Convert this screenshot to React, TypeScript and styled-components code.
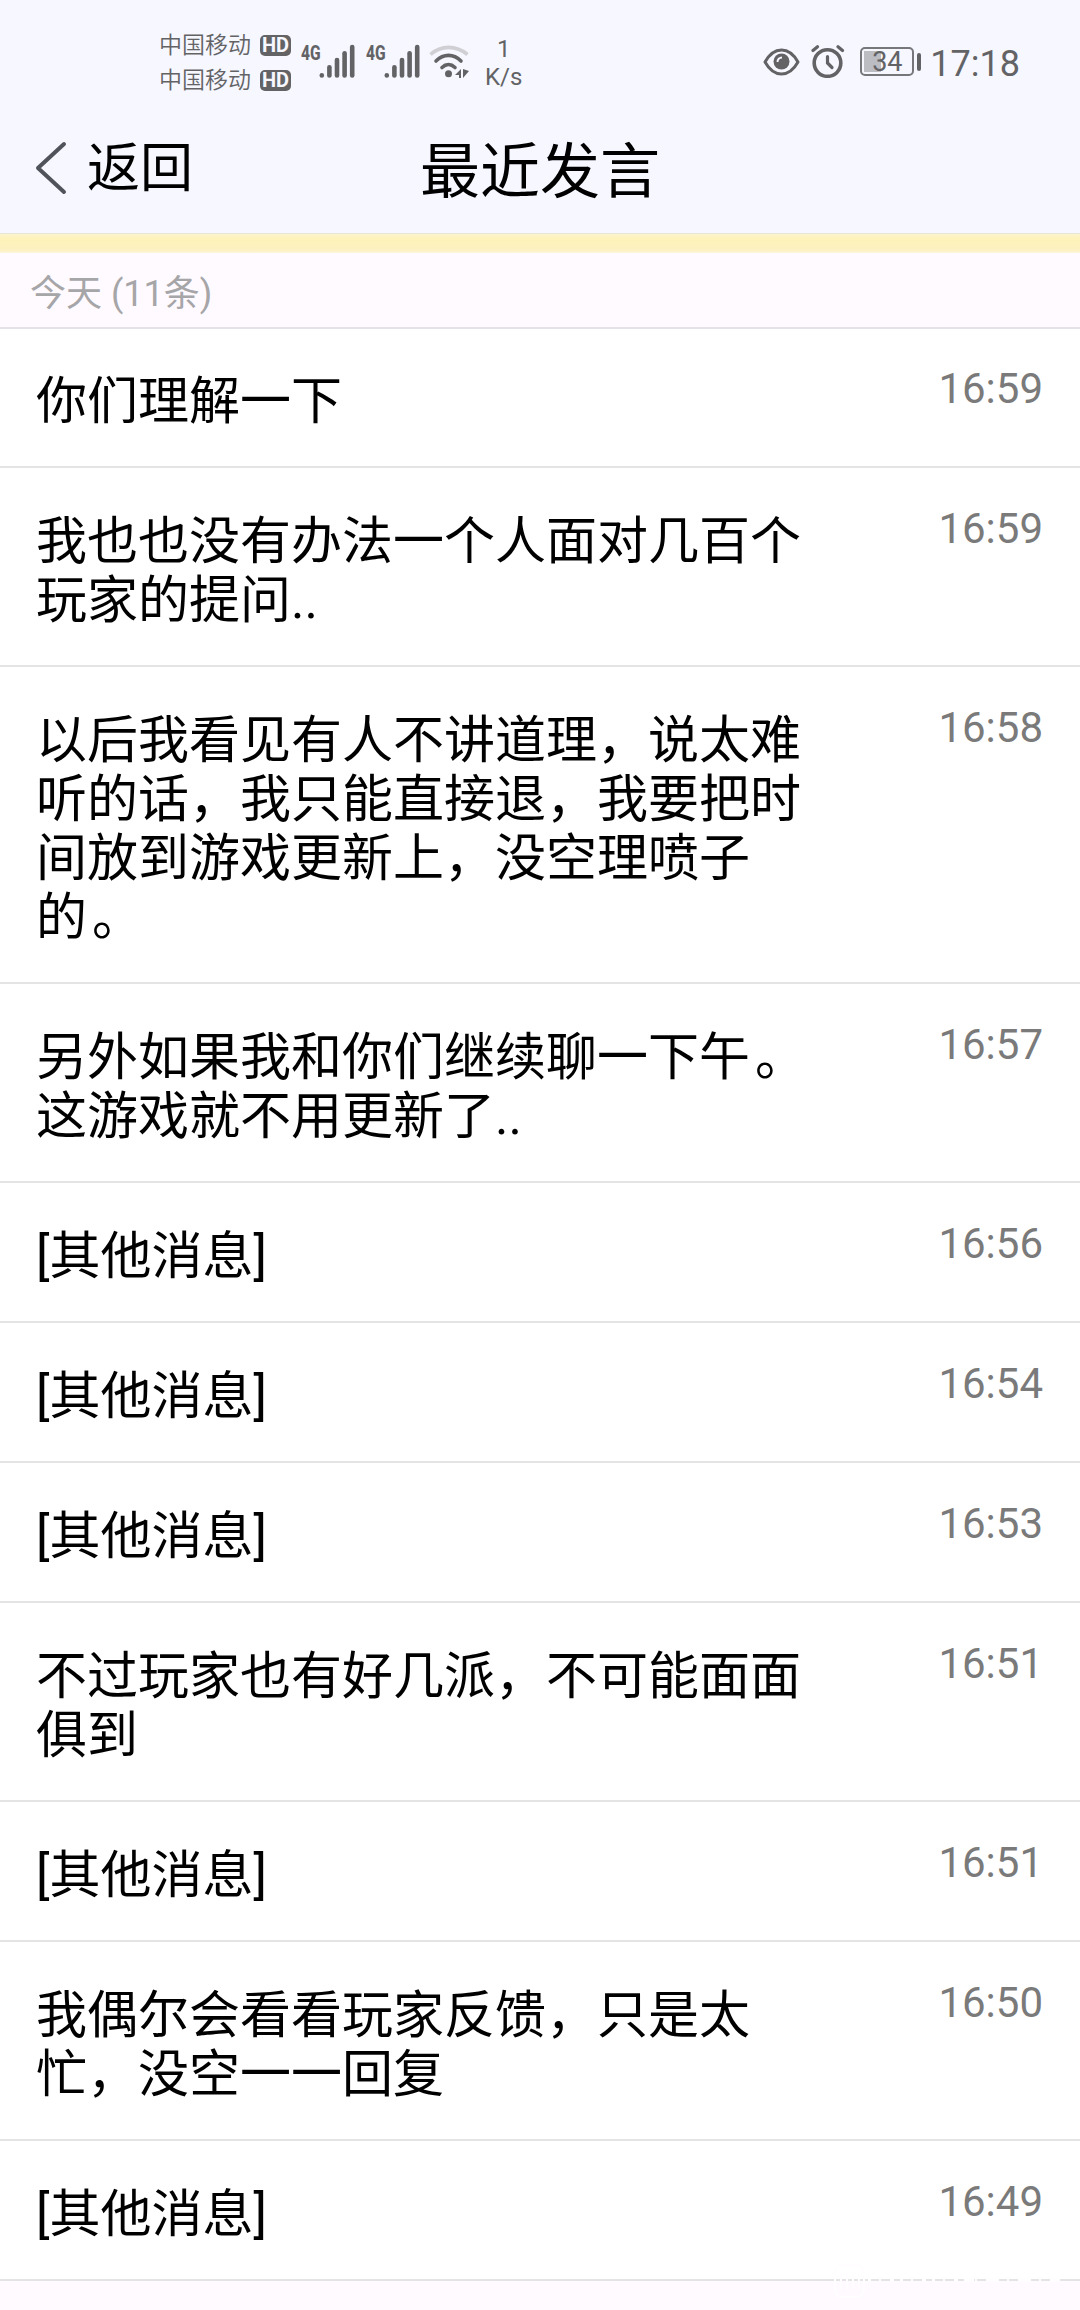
import React from 'react';
import styled, { createGlobalStyle } from 'styled-components';

const Global = createGlobalStyle`
  * { box-sizing: border-box; }
  body { margin: 0; background: #fefaff; }
`;

const Screen = styled.div`
  position: relative;
  width: 1080px;
  height: 2310px;
  overflow: hidden;
  display: flex;
  flex-direction: column;
  background: #fefaff;
  color: #000;
  font-family: Roboto, 'Noto Sans CJK SC', sans-serif;
`;

const StatusBar = styled.header`
  height: 110px;
  flex: none;
  display: flex;
  align-items: flex-start;
  justify-content: space-between;
  padding: 0 60px 0 159px;
  background: #f6f7ff;
  color: #636366;
`;

const StatusGroup = styled.div`
  display: flex;
  align-items: flex-start;
`;

const Carriers = styled.div`
  display: flex;
  flex-direction: column;
  padding-top: 28px;
  margin-right: 10px;
`;

const Carrier = styled.div`
  display: flex;
  align-items: center;
  height: 35px;
  gap: 9px;
  font-size: 23px;
  font-weight: 350;
  line-height: 35px;
`;

const HdBadge = styled.span`
  width: 31px;
  height: 21px;
  border-radius: 5px;
  background: #636366;
  color: #f6f7ff;
  font-size: 20px;
  font-weight: 700;
  line-height: 21px;
  text-align: center;
`;

const Signal = styled.div`
  display: flex;
  width: 65px;
  padding-top: 44px;
`;

const NetworkType = styled.span`
  width: 18px;
  font-size: 21px;
  font-weight: 800;
  line-height: 19px;
  transform: scaleX(0.74);
  transform-origin: left;
`;

const Drawing = styled.svg<{ $top?: number; $left?: number }>`
  display: block;
  flex: none;
  margin-top: ${(p) => p.$top ?? 0}px;
  margin-left: ${(p) => p.$left ?? 0}px;
`;

const Speed = styled.div`
  display: flex;
  flex-direction: column;
  align-items: center;
  padding-top: 35px;
  margin-left: 16px;
  font-size: 24px;
  line-height: 28px;
`;

const Battery = styled.div`
  display: flex;
  align-items: center;
  gap: 3px;
  margin: 47px 0 0 15px;
`;

const BatteryCell = styled.div`
  width: 54px;
  height: 29px;
  padding: 2px 2px 0;
  border: 2px solid #77777b;
  border-radius: 5px;
  background: linear-gradient(#bcbcc3, #bcbcc3) 2px 2px / 17px 21px no-repeat;
  font-size: 27px;
  font-weight: 400;
  line-height: 22px;
  text-align: center;
`;

const BatteryTip = styled.div`
  width: 4px;
  height: 18px;
  border-radius: 2px;
  background: #636366;
`;

const Clock = styled.div`
  margin: 43px 0 0 9px;
  font-size: 36px;
  line-height: 42px;
`;

const NavBar = styled.nav`
  height: 124px;
  flex: none;
  display: grid;
  grid-template-columns: 1fr auto 1fr;
  align-items: start;
  background: #f6f7ff;
  border-bottom: 1px solid #e6e6d8;
`;

const Back = styled.div`
  display: flex;
  align-items: flex-start;
  padding-left: 35px;
  gap: 20px;
  font-size: 53px;
  line-height: 60px;
`;

const BackLabel = styled.span`
  padding-top: 29px;
`;

const Title = styled.h1`
  margin: 0;
  padding-top: 29px;
  font-size: 60px;
  font-weight: 400;
  line-height: 68px;
`;

const Notice = styled.div`
  height: 19px;
  flex: none;
  background: linear-gradient(#fcf4cf, #fdf2b8 5px, #fdf0c2 16px, #fdf6de);
`;

const DayHeader = styled.div`
  height: 76px;
  flex: none;
  padding: 20px 30px 0;
  border-bottom: 2px solid #e4e2e6;
  color: #a6a5a8;
  font-size: 36px;
  line-height: 42px;
`;

const Row = styled.article`
  flex: none;
  display: flex;
  justify-content: space-between;
  align-items: flex-start;
  padding: 44px 37px 35px 36px;
  border-bottom: 2px solid #e4e4e4;
  background: #fff;

  &:first-child {
    padding-top: 43px;
  }
`;

const Rows = styled.main`
  display: flex;
  flex-direction: column;
`;

const Message = styled.div`
  width: 772px;
  font-size: 51px;
  line-height: 59px;
  white-space: pre-line;
`;

const FullStop = styled.span`
  margin-left: 5px;
`;

const Time = styled.time`
  margin-top: -8px;
  color: #7a7a7a;
  font-size: 42px;
  line-height: 50px;
`;

const Watermark = styled.svg`
  position: absolute;
  left: 832px;
  top: 2262px;
`;

const barTops = [31.3, 23.3, 16, 9.3, 3];

function SignalMeter() {
  return (
    <Signal>
      <NetworkType>4G</NetworkType>
      <Drawing width="36" height="35" viewBox="0 0 36 35" stroke="#636366" strokeWidth="4.6" strokeLinecap="round">
        {barTops.map((top, i) => (
          <path key={top} d={`M${2.8 + i * 7.6} ${top}V31.500`} />
        ))}
      </Drawing>
    </Signal>
  );
}

function WifiIcon() {
  return (
    <Drawing width="40" height="34" viewBox="0 0 40 34" fill="none" strokeWidth="3.6" $top={45} $left={-2}>
      <path d="M1.500 9.500C12 0 27 0 38.500 9.500" stroke="#cfcfd4" />
      <path d="M7 16C14.500 8.500 24.500 8.500 32 16" stroke="#636366" strokeLinecap="round" />
      <path d="M13 22.500C17 18.700 22 18.700 26 22.500" stroke="#636366" strokeLinecap="round" />
      <circle cx="19.500" cy="28.700" r="3.500" fill="#636366" />
      <path d="M32 24v9h-2v-3h-4zM34 24v9l6-7z" fill="#636366" />
    </Drawing>
  );
}

function EyeIcon() {
  return (
    <Drawing width="37" height="28" viewBox="0 0 37 28" fill="none" $top={48}>
      <path d="M2 14C11-2 26-2 35 14C26 30 11 30 2 14Z" stroke="#636366" strokeWidth="3" strokeLinejoin="round" />
      <circle cx="18.500" cy="13.500" r="8" fill="#636366" />
      <path d="M14.500 14a4.500 4.500 0 0 1 4.500-4.500" stroke="#f6f7ff" strokeWidth="2" />
    </Drawing>
  );
}

function AlarmIcon() {
  return (
    <Drawing width="34" height="34" viewBox="0 0 34 34" fill="none" stroke="#636366" strokeLinecap="round" $top={44} $left={11}>
      <circle cx="16.500" cy="19" r="13.300" strokeWidth="3.600" />
      <path d="M2 6.500L6.500 2.800M27 2.800L31.500 6.500" strokeWidth="3.200" />
      <path d="M16.500 12.500V19L21 23.500" strokeWidth="3.200" />
    </Drawing>
  );
}

const messages = [
  { text: '你们理解一下', time: '16:59' },
  { text: '我也也没有办法一个人面对几百个\n玩家的提问..', time: '16:59' },
  { text: '以后我看见有人不讲道理，说太难\n听的话，我只能直接退，我要把时\n间放到游戏更新上，没空理喷子\n的。', time: '16:58' },
  { text: '另外如果我和你们继续聊一下午。\n这游戏就不用更新了..', time: '16:57' },
  { text: '[其他消息]', time: '16:56' },
  { text: '[其他消息]', time: '16:54' },
  { text: '[其他消息]', time: '16:53' },
  { text: '不过玩家也有好几派，不可能面面\n俱到', time: '16:51' },
  { text: '[其他消息]', time: '16:51' },
  { text: '我偶尔会看看玩家反馈，只是太\n忙，没空一一回复', time: '16:50' },
  { text: '[其他消息]', time: '16:49' },
];

function MessageLine({ line }: { line: string }) {
  const endsWithStop = line.endsWith('。');
  return (
    <div>
      {endsWithStop ? line.slice(0, -1) : line}
      {endsWithStop && <FullStop>。</FullStop>}
    </div>
  );
}

export default function App() {
  return (
    <Screen lang="zh-CN">
      <Global />
      <StatusBar>
        <StatusGroup>
          <Carriers>
            <Carrier>中国移动<HdBadge>HD</HdBadge></Carrier>
            <Carrier>中国移动<HdBadge>HD</HdBadge></Carrier>
          </Carriers>
          <SignalMeter />
          <SignalMeter />
          <WifiIcon />
          <Speed><span>1</span><span>K/s</span></Speed>
        </StatusGroup>
        <StatusGroup>
          <EyeIcon />
          <AlarmIcon />
          <Battery><BatteryCell>34</BatteryCell><BatteryTip /></Battery>
          <Clock>17:18</Clock>
        </StatusGroup>
      </StatusBar>
      <NavBar>
        <Back>
          <Drawing width="32" height="56" viewBox="0 0 32 56" fill="none" stroke="#50545a" strokeWidth="4" strokeLinecap="round" strokeLinejoin="round" $top={30}>
            <path d="M29 4L3 28L29 52" />
          </Drawing>
          <BackLabel>返回</BackLabel>
        </Back>
        <Title>最近发言</Title>
      </NavBar>
      <Notice />
      <DayHeader>今天 (11条)</DayHeader>
      <Rows>
        {messages.map((m, i) => (
          <Row key={i}>
            <Message>
              {m.text.split('\n').map((line, j) => (
                <MessageLine key={j} line={line} />
              ))}
            </Message>
            <Time>{m.time}</Time>
          </Row>
        ))}
      </Rows>
      <Watermark width="232" height="38" viewBox="0 0 232 38" fill="none" stroke="#fffdff">
        <rect x="3" y="3" width="29" height="32" rx="7" strokeWidth="2" />
        <path d="M9 11v16M15 11v16M21 11v16M27 11v16" strokeWidth="2" />
        <path d="M36 18H228" strokeWidth="3" strokeDasharray="3 8 2 9 4 6" />
        <path d="M134 18h8M158 18h7M190 18h8M218 18h10" strokeWidth="3" />
      </Watermark>
    </Screen>
  );
}
